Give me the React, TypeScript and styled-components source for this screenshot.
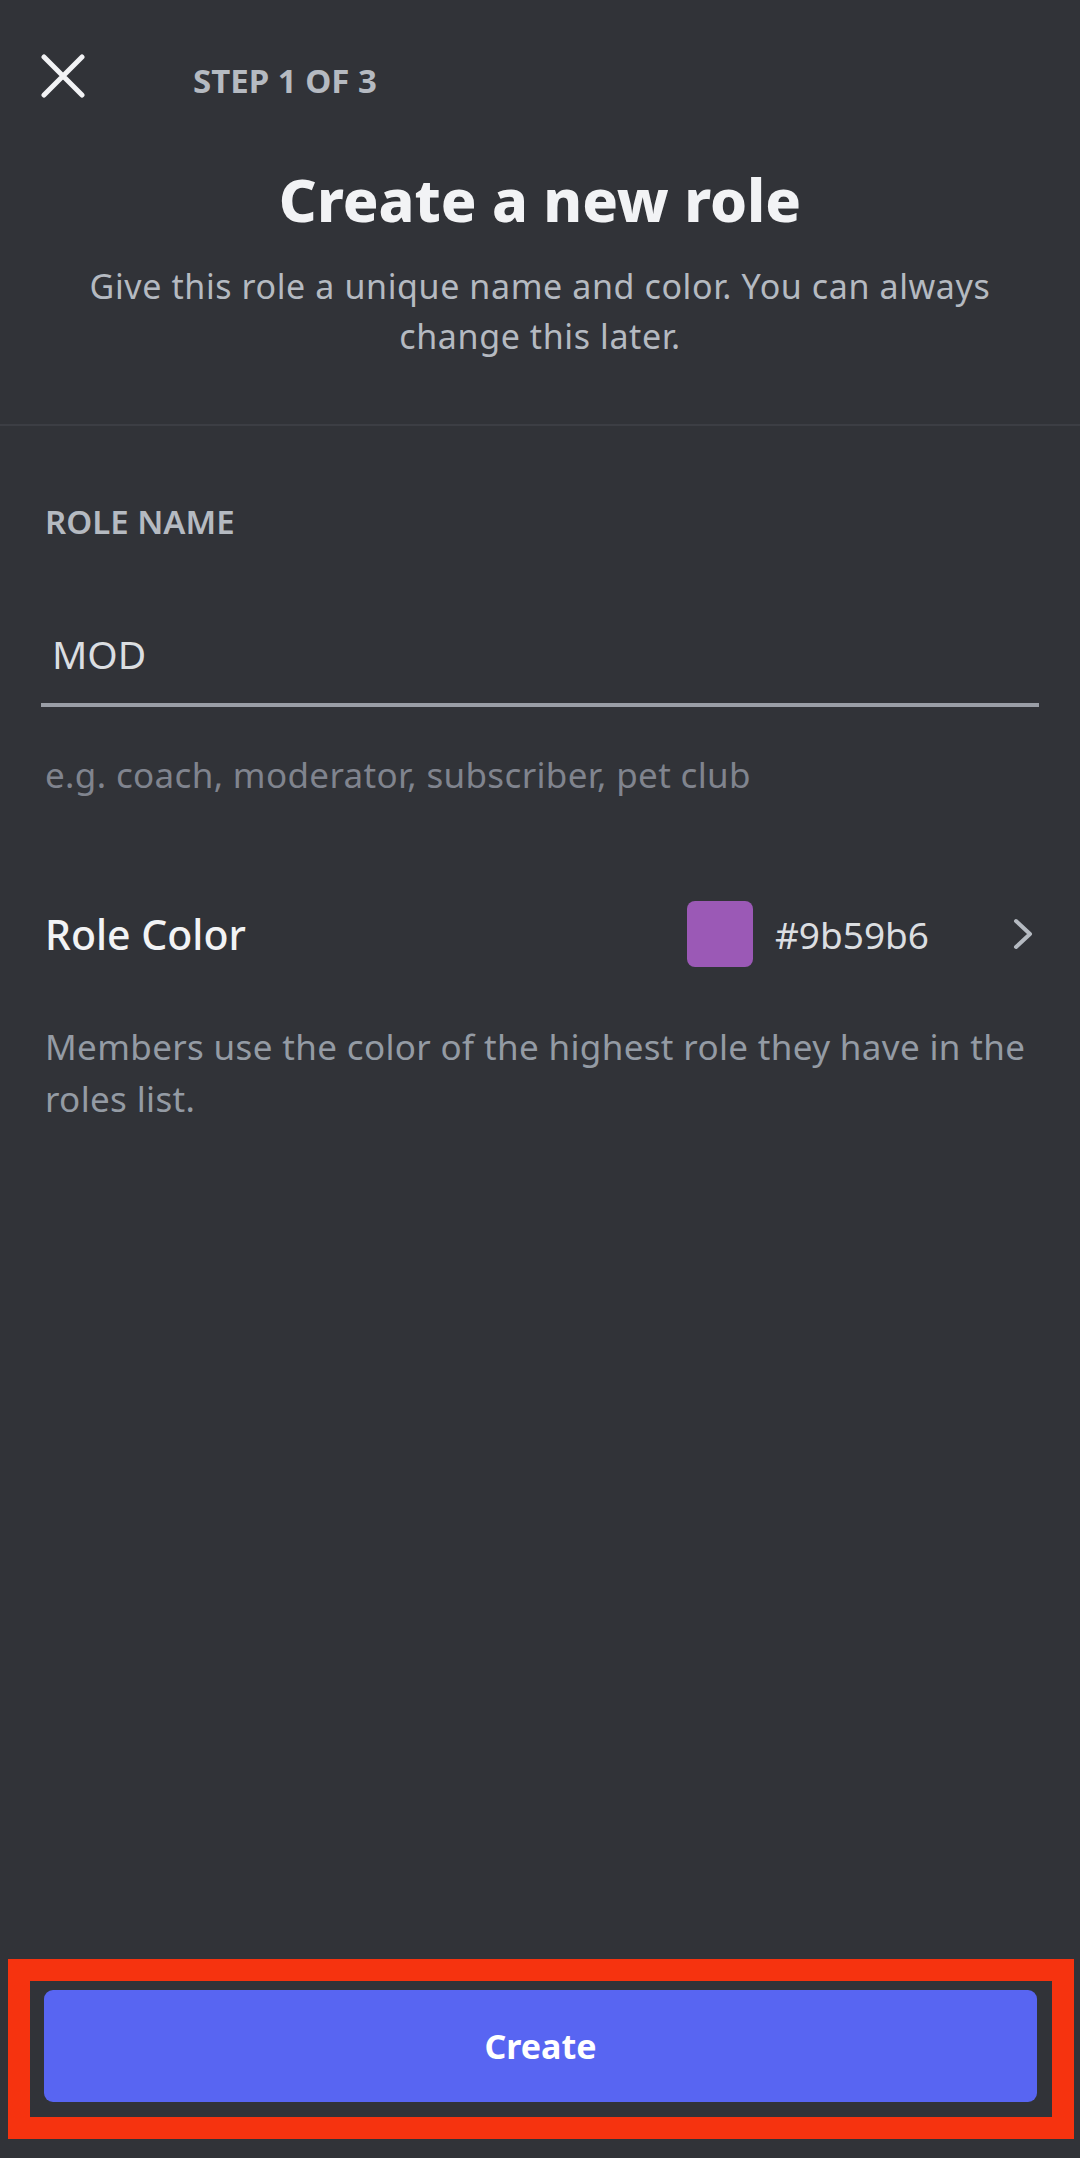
import React from 'react';
import styled, { createGlobalStyle } from 'styled-components';

const GlobalStyle = createGlobalStyle`
  html, body {
    margin: 0;
    padding: 0;
    background: #313338;
  }
  body {
    font-family: "Noto Sans", "Open Sans", sans-serif;
  }
`;

const Page = styled.div`
  width: 1080px;
  min-height: 2158px;
  display: flex;
  flex-direction: column;
  background: #313338;
  box-sizing: border-box;
`;

const Header = styled.header`
  padding: 54px 41px 63px;
  display: flex;
  flex-direction: column;
  border-bottom: 2px solid #3c3e44;
`;

const TopBar = styled.div`
  display: flex;
  align-items: center;
  height: 44px;
`;

const CloseButton = styled.button`
  width: 44px;
  height: 44px;
  padding: 0;
  border: 0;
  background: none;
  display: flex;
  align-items: center;
  justify-content: center;
`;

const StepLabel = styled.span`
  margin-left: 108px;
  margin-top: 8px;
  font-size: 33px;
  font-weight: 700;
  color: #b5bac1;
`;

const Title = styled.h1`
  margin: 66px 0 0;
  font-size: 59px;
  line-height: 70px;
  font-weight: 800;
  color: #f2f3f5;
  text-align: center;
`;

const Subtitle = styled.p`
  margin: 27px 0 0;
  font-size: 34px;
  line-height: 50px;
  letter-spacing: 0.6px;
  color: #b5bac1;
  text-align: center;
`;

const Section = styled.section`
  padding: 0 41px;
  display: flex;
  flex-direction: column;
`;

const FieldLabel = styled.div`
  margin-top: 76px;
  padding-left: 4px;
  font-size: 33px;
  line-height: 40px;
  font-weight: 600;
  color: #b5bac1;
`;

const NameInput = styled.input`
  margin-top: 85px;
  padding: 0 0 24px 11px;
  border: 0;
  border-bottom: 4px solid #9a9ea6;
  background: transparent;
  font-family: inherit;
  font-size: 39px;
  line-height: 52px;
  height: 80px;
  color: #dbdee1;
  outline: none;
  box-sizing: border-box;
`;

const Hint = styled.div<{ $top: number; $muted?: boolean }>`
  margin-top: ${(p) => p.$top}px;
  padding-left: 4px;
  font-size: 35px;
  letter-spacing: 0.35px;
  line-height: ${(p) => (p.$muted ? 44 : 52)}px;
  color: ${(p) => (p.$muted ? '#80848e' : '#949ba4')};
`;

const ColorRow = styled.div`
  margin-top: 104px;
  padding-left: 4px;
  height: 66px;
  display: flex;
  align-items: center;
`;

const RowTitle = styled.span`
  flex: 1;
  font-size: 41px;
  font-weight: 500;
  color: #f2f3f5;
`;

const Swatch = styled.span<{ $color: string }>`
  width: 66px;
  height: 66px;
  border-radius: 8px;
  background: ${(p) => p.$color};
`;

const HexValue = styled.span`
  margin-left: 22px;
  font-size: 37px;
  color: #dbdee1;
`;

const Chevron = styled.span`
  margin-left: 84px;
  margin-right: 4px;
  display: flex;
`;

const Spacer = styled.div`
  flex: 1;
`;

const Highlight = styled.div`
  margin: 0 6px 19px 8px;
  border: 22px solid #f6330f;
  padding: 9px 15px 15px 14px;
`;

const CreateButton = styled.button`
  width: 100%;
  height: 112px;
  border: 0;
  border-radius: 9px;
  background: #5865f2;
  color: #ffffff;
  font-family: inherit;
  font-size: 34px;
  font-weight: 700;
`;

export default function App() {
  const roleColor = '#9b59b6';
  return (
    <Page>
      <GlobalStyle />
      <Header>
        <TopBar>
          <CloseButton aria-label="Close">
            <svg width="44" height="44" viewBox="0 0 44 44">
              <path d="M3 3 L41 41 M41 3 L3 41" stroke="#f2f3f5" strokeWidth="5" strokeLinecap="round" />
            </svg>
          </CloseButton>
          <StepLabel>STEP 1 OF 3</StepLabel>
        </TopBar>
        <Title>Create a new role</Title>
        <Subtitle>
          Give this role a unique name and color. You can always
          <br />
          change this later.
        </Subtitle>
      </Header>
      <Section>
        <FieldLabel>ROLE NAME</FieldLabel>
        <NameInput defaultValue="MOD" />
        <Hint $top={46} $muted>e.g. coach, moderator, subscriber, pet club</Hint>
        <ColorRow>
          <RowTitle>Role Color</RowTitle>
          <Swatch $color={roleColor} />
          <HexValue>{roleColor}</HexValue>
          <Chevron>
            <svg width="22" height="34" viewBox="0 0 22 34">
              <path d="M3 4 L17 17 L3 30" fill="none" stroke="#b5bac1" strokeWidth="4" strokeLinecap="round" strokeLinejoin="round" />
            </svg>
          </Chevron>
        </ColorRow>
        <Hint $top={54}>
          Members use the color of the highest role they have in the roles list.
        </Hint>
      </Section>
      <Spacer />
      <Highlight>
        <CreateButton>Create</CreateButton>
      </Highlight>
    </Page>
  );
}
